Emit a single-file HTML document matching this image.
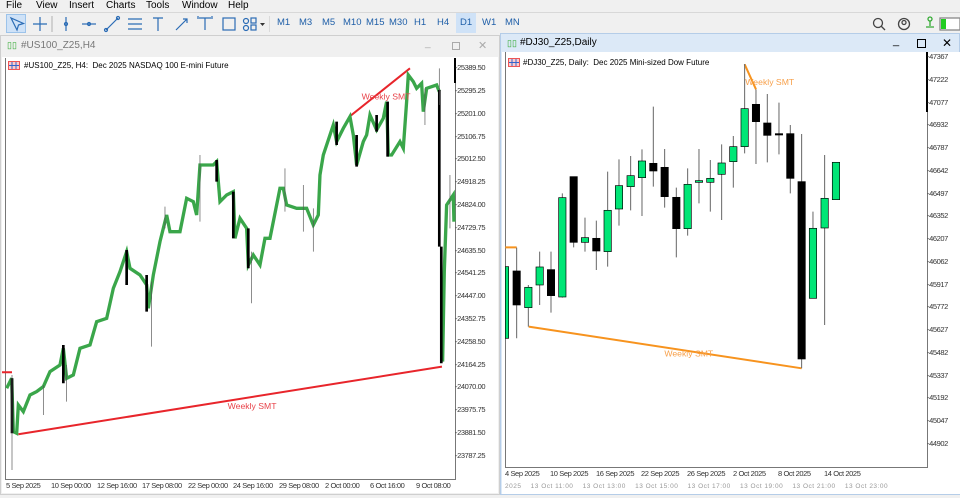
<!DOCTYPE html>
<html><head><meta charset="utf-8"><style>
*{margin:0;padding:0;box-sizing:border-box}
body{width:960px;height:498px;overflow:hidden;background:#f0f0f0;font-family:"Liberation Sans",sans-serif;position:relative}
.a{position:absolute}
.menu span{position:absolute;top:0;font-size:10px;color:#000}
.tf{position:absolute;top:17px;font-size:9.5px;color:#1f5fa8}
.ax{position:absolute;font-size:7.5px;color:#333;white-space:nowrap;letter-spacing:-0.4px}
</style></head><body>
<div class="menu">
<span style="left:6px">File</span><span style="left:36px">View</span><span style="left:69px">Insert</span><span style="left:106px">Charts</span><span style="left:146px">Tools</span><span style="left:182px">Window</span><span style="left:228px">Help</span>
</div>
<div class="a" style="left:0;top:12px;width:960px;height:1px;background:#d8d8d8"></div>
<div class="a" style="left:6px;top:14px;width:20px;height:19px;background:#cfe2f7;border:1px solid #9cc3ea"></div>
<svg class="a" style="left:0;top:12px" width="270" height="24" viewBox="0 0 270 24" fill="none" stroke="#2b6cb5" stroke-width="1.2">
<path d="M11 6 l6 12 1.5-5 5-1.5z"/>
<path d="M40 5v14M33 12h14"/>
<line x1="52" y1="4" x2="52" y2="20" stroke="#bbb"/>
<path d="M66 5v14"/><circle cx="66" cy="12" r="1.5"/>
<path d="M82 12h14"/><circle cx="89" cy="12" r="1.5"/>
<path d="M106 18l12-12"/><circle cx="106" cy="18" r="1.5"/><circle cx="118" cy="6" r="1.5"/>
<path d="M128 7h14M128 12h14M128 17h14"/>
<path d="M153 6h10M158 6v13"/>
<path d="M176 18l11-11M183 7h4v4"/>
<path d="M199 6h12M205 6v12M198 4v3M212 4v3"/>
<rect x="223" y="6" width="12" height="12"/>
<circle cx="246" cy="9" r="2.5"/><rect x="251" y="6" width="5" height="5"/><circle cx="246" cy="16" r="2.5"/><rect x="251" y="13" width="5" height="5"/>
<path d="M260 11h5l-2.5 3z" fill="#333" stroke="none"/>
<line x1="270" y1="4" x2="270" y2="20" stroke="#ccc"/>
</svg>
<span class="tf" style="left:277px">M1</span><span class="tf" style="left:299px">M3</span><span class="tf" style="left:322px">M5</span><span class="tf" style="left:343px">M10</span><span class="tf" style="left:366px">M15</span><span class="tf" style="left:389px">M30</span><span class="tf" style="left:414px">H1</span><span class="tf" style="left:437px">H4</span>
<div class="a" style="left:456px;top:13px;width:20px;height:20px;background:#cfe2f7"></div>
<span class="tf" style="left:460px">D1</span><span class="tf" style="left:482px">W1</span><span class="tf" style="left:505px">MN</span>
<svg class="a" style="left:868px;top:14px" width="92" height="20" fill="none" stroke="#444" stroke-width="1.3">
<circle cx="10" cy="9" r="4.5"/><path d="M13 12l4 4"/>
<circle cx="36" cy="10" r="5.5"/><circle cx="36" cy="8.5" r="2"/>
<circle cx="62" cy="5" r="2" stroke="#3a3"/><path d="M62 7v5M58 13h8" stroke="#3a3"/>
<rect x="72" y="4" width="20" height="12" fill="#fff" stroke="#888"/><rect x="73" y="5" width="5" height="10" fill="#2c2" stroke="none"/>
</svg>

<!-- left window -->
<div class="a" style="left:0;top:35px;width:500px;height:460px;background:#f0f0f0;border:1px solid #cfcfcf"></div>
<span class="a" style="left:7px;top:40px;font-size:9px;color:#3a3">&#9647;&#9647;</span>
<span class="a" style="left:21px;top:40px;font-size:10px;color:#777">#US100_Z25,H4</span>
<span class="a" style="left:425px;top:38px;font-size:10px;color:#aaa">_</span>
<div class="a" style="left:452px;top:42px;width:8px;height:8px;border:1px solid #aaa"></div>
<span class="a" style="left:478px;top:39px;font-size:11px;color:#aaa">✕</span>
<div class="a" style="left:2px;top:57px;width:496px;height:436px;background:#fff"></div>
<div class="a" style="left:5px;top:58px;width:451px;height:422px;border:1px solid #777;border-top:none;border-bottom:1px solid #777"></div>
<div class="a" style="left:454px;top:58px;width:2px;height:25px;background:#000"></div>
<svg class="a" style="left:8px;top:61px" width="12" height="9"><rect x="0.5" y="0.5" width="11" height="8" fill="#fcc" stroke="#e55"/><path d="M4 1v7M8 1v7M1 4.5h10" stroke="#36c" stroke-width="1"/></svg>
<span class="a" style="left:24px;top:61px;font-size:8px;color:#000">#US100_Z25, H4:&nbsp; Dec 2025 NASDAQ 100 E-mini Future</span>

<svg class="a" style="left:0;top:55px" width="500" height="443">
<g transform="scale(0.3333)">
<path d="M6 952h30 M55 1138 L1326 935 M1052 182 L1230 40" stroke="#e8252b" stroke-width="6" fill="none"/>
<polyline fill="none" stroke="#3aa64a" stroke-width="10" points="20,1000 35,970 40,1130 50,1135 55,1050 70,1070 90,1020 110,1010 130,995 150,950 180,930 190,880 200,970 220,960 240,880 270,870 290,800 320,790 340,700 360,650 380,590 390,640 420,660 440,690 445,760 460,660 480,560 500,480 510,530 540,530 560,430 580,440 590,480 600,330 640,330 650,320 660,440 680,420 700,410 705,550 720,490 740,520 745,630 760,600 780,630 795,550 810,550 840,400 850,400 860,450 890,460 920,460 940,510 955,480 960,360 970,300 1000,210 1010,260 1030,220 1050,185 1060,240 1070,330 1090,260 1100,240 1110,180 1130,225 1150,190 1160,140 1165,300 1175,300 1200,260 1210,280 1220,140 1225,60 1240,80 1250,100 1265,85 1270,170 1280,100 1310,90 1318,110"/>
<polyline fill="none" stroke="#3aa64a" stroke-width="10" points="1328,920 1333,650 1340,450 1360,420 1362,500"/>
<g stroke="#000" stroke-width="8" fill="none">
<path d="M36 970V1135 M440 660V770 M700 410V550 M745 520V640 M1163 140V305 M1318 105V575 M1324 575V925 M650 315V380 M380 585V690 M190 870V985 M1010 200V270 M1070 240V335 M1130 180V230"/>
</g>
<g stroke="#555" stroke-width="2" fill="none">
<path d="M36 960V1245 M455 680V875 M755 590V745 M940 460V590 M1318 40V150 M1275 100V210 M855 340V470 M495 455V520 M130 990V1080 M200 930V1040 M600 300V500 M910 390V530 M1350 360V520"/>
</g>
<text x="1085" y="133" fill="#e8434a" font-size="26" font-family="Liberation Sans">Weekly SMT</text>
<text x="683" y="1062" fill="#e8434a" font-size="26" font-family="Liberation Sans">Weekly SMT</text>
</g>
</svg>
<div class="ax" style="left:455px;top:63px">-25389.50</div>
<div class="ax" style="left:455px;top:86px">-25295.25</div>
<div class="ax" style="left:455px;top:109px">-25201.00</div>
<div class="ax" style="left:455px;top:132px">-25106.75</div>
<div class="ax" style="left:455px;top:154px">-25012.50</div>
<div class="ax" style="left:455px;top:177px">-24918.25</div>
<div class="ax" style="left:455px;top:200px">-24824.00</div>
<div class="ax" style="left:455px;top:223px">-24729.75</div>
<div class="ax" style="left:455px;top:246px">-24635.50</div>
<div class="ax" style="left:455px;top:268px">-24541.25</div>
<div class="ax" style="left:455px;top:291px">-24447.00</div>
<div class="ax" style="left:455px;top:314px">-24352.75</div>
<div class="ax" style="left:455px;top:337px">-24258.50</div>
<div class="ax" style="left:455px;top:360px">-24164.25</div>
<div class="ax" style="left:455px;top:382px">-24070.00</div>
<div class="ax" style="left:455px;top:405px">-23975.75</div>
<div class="ax" style="left:455px;top:428px">-23881.50</div>
<div class="ax" style="left:455px;top:451px">-23787.25</div>
<div class="ax" style="left:6px;top:481px">5 Sep 2025</div>
<div class="ax" style="left:51px;top:481px">10 Sep 00:00</div>
<div class="ax" style="left:97px;top:481px">12 Sep 16:00</div>
<div class="ax" style="left:142px;top:481px">17 Sep 08:00</div>
<div class="ax" style="left:188px;top:481px">22 Sep 00:00</div>
<div class="ax" style="left:233px;top:481px">24 Sep 16:00</div>
<div class="ax" style="left:279px;top:481px">29 Sep 08:00</div>
<div class="ax" style="left:325px;top:481px">2 Oct 00:00</div>
<div class="ax" style="left:370px;top:481px">6 Oct 16:00</div>
<div class="ax" style="left:416px;top:481px">9 Oct 08:00</div>

<!-- right window -->
<div class="a" style="left:500px;top:33px;width:460px;height:462px;background:#dce9f7;border:1px solid #b5cde8"></div>
<span class="a" style="left:507px;top:38px;font-size:9px;color:#3a3">&#9647;&#9647;</span>
<span class="a" style="left:520px;top:37px;font-size:10px;color:#000">#DJ30_Z25,Daily</span>
<span class="a" style="left:893px;top:35px;font-size:11px;color:#000">_</span>
<div class="a" style="left:917px;top:39px;width:9px;height:9px;border:1px solid #000"></div>
<span class="a" style="left:942px;top:36px;font-size:12px;color:#000">✕</span>
<div class="a" style="left:502px;top:52px;width:458px;height:428px;background:#fff"></div>
<div class="a" style="left:505px;top:52px;width:423px;height:416px;border:1px solid #777;border-top:none"></div>
<div class="a" style="left:926px;top:52px;width:2px;height:60px;background:#000"></div>
<svg class="a" style="left:508px;top:58px" width="12" height="9"><rect x="0.5" y="0.5" width="11" height="8" fill="#fcc" stroke="#e55"/><path d="M4 1v7M8 1v7M1 4.5h10" stroke="#36c" stroke-width="1"/></svg>
<span class="a" style="left:523px;top:58px;font-size:8px;color:#000">#DJ30_Z25, Daily:&nbsp; Dec 2025 Mini-sized Dow Future</span>

<svg class="a" style="left:500px;top:55px" width="460" height="443">
<g transform="scale(0.3333)">
<g fill="none" stroke="#f7931e" stroke-width="6">
<path d="M16 577H50 M86 815 L905 940 M734 28 L768 103"/>
</g>
<g stroke="#666" stroke-width="3">
<path d="M50 578V850M85 690V815M119 590V750M153 590V773M187 415V728M221 365V577M255 488V590M289 497V645M323 350V635M357 313V512M392 303V466M426 283V483M460 155V395M494 282V458M529 398V607M563 340V542M597 282V445M631 315V470M665 268V495M700 243V398M734 27V295M768 103V327M802 117V322M837 143V298M871 210V415M905 237V940M939 470V730M974 300V810"/>
</g>
<g stroke="#000" stroke-width="2">
<rect x="16" y="635" width="10" height="215" fill="#00e676"/>
<rect x="39" y="648" width="22" height="102" fill="#000"/>
<rect x="74" y="697" width="22" height="61" fill="#00e676"/>
<rect x="108" y="636" width="22" height="54" fill="#00e676"/>
<rect x="142" y="644" width="22" height="78" fill="#000"/>
<rect x="176" y="428" width="22" height="298" fill="#00e676"/>
<rect x="210" y="365" width="22" height="197" fill="#000"/>
<rect x="244" y="548" width="22" height="14" fill="#00e676"/>
<rect x="278" y="550" width="22" height="38" fill="#000"/>
<rect x="312" y="466" width="22" height="124" fill="#00e676"/>
<rect x="346" y="392" width="22" height="70" fill="#00e676"/>
<rect x="381" y="362" width="22" height="33" fill="#00e676"/>
<rect x="415" y="318" width="22" height="50" fill="#00e676"/>
<rect x="449" y="325" width="22" height="23" fill="#000"/>
<rect x="483" y="337" width="22" height="88" fill="#000"/>
<rect x="518" y="427" width="22" height="94" fill="#000"/>
<rect x="552" y="388" width="22" height="133" fill="#00e676"/>
<rect x="586" y="377" width="22" height="5" fill="#00e676"/>
<rect x="620" y="370" width="22" height="12" fill="#00e676"/>
<rect x="654" y="324" width="22" height="34" fill="#00e676"/>
<rect x="689" y="275" width="22" height="45" fill="#00e676"/>
<rect x="723" y="161" width="22" height="114" fill="#00e676"/>
<rect x="757" y="148" width="22" height="52" fill="#000"/>
<rect x="791" y="204" width="22" height="37" fill="#000"/>
<rect x="826" y="236" width="22" height="4" fill="#000"/>
<rect x="860" y="236" width="22" height="134" fill="#000"/>
<rect x="894" y="380" width="22" height="532" fill="#000"/>
<rect x="928" y="520" width="22" height="210" fill="#00e676"/>
<rect x="963" y="430" width="22" height="89" fill="#00e676"/>
<rect x="997" y="322" width="22" height="112" fill="#00e676"/>
</g>
<text x="736" y="90" fill="#f7a04a" font-size="26" font-family="Liberation Sans">Weekly SMT</text>
<text x="493" y="904" fill="#f7a04a" font-size="26" font-family="Liberation Sans">Weekly SMT</text>
</g>
</svg>
<div class="ax" style="left:927px;top:52px">-47367</div>
<div class="ax" style="left:927px;top:75px">-47222</div>
<div class="ax" style="left:927px;top:98px">-47077</div>
<div class="ax" style="left:927px;top:120px">-46932</div>
<div class="ax" style="left:927px;top:143px">-46787</div>
<div class="ax" style="left:927px;top:166px">-46642</div>
<div class="ax" style="left:927px;top:189px">-46497</div>
<div class="ax" style="left:927px;top:211px">-46352</div>
<div class="ax" style="left:927px;top:234px">-46207</div>
<div class="ax" style="left:927px;top:257px">-46062</div>
<div class="ax" style="left:927px;top:280px">-45917</div>
<div class="ax" style="left:927px;top:302px">-45772</div>
<div class="ax" style="left:927px;top:325px">-45627</div>
<div class="ax" style="left:927px;top:348px">-45482</div>
<div class="ax" style="left:927px;top:371px">-45337</div>
<div class="ax" style="left:927px;top:393px">-45192</div>
<div class="ax" style="left:927px;top:416px">-45047</div>
<div class="ax" style="left:927px;top:439px">-44902</div>
<div class="ax" style="left:505px;top:469px">4 Sep 2025</div>
<div class="ax" style="left:550px;top:469px">10 Sep 2025</div>
<div class="ax" style="left:596px;top:469px">16 Sep 2025</div>
<div class="ax" style="left:641px;top:469px">22 Sep 2025</div>
<div class="ax" style="left:687px;top:469px">26 Sep 2025</div>
<div class="ax" style="left:733px;top:469px">2 Oct 2025</div>
<div class="ax" style="left:778px;top:469px">8 Oct 2025</div>
<div class="ax" style="left:824px;top:469px">14 Oct 2025</div>
<div class="a" style="left:502px;top:480px;width:458px;height:14px;background:#fff"></div>
<div class="ax" style="left:505px;top:483px;color:#999;font-size:6.5px;letter-spacing:0.5px">2025 &nbsp;&nbsp; 13 Oct 11:00 &nbsp;&nbsp; 13 Oct 13:00 &nbsp;&nbsp; 13 Oct 15:00 &nbsp;&nbsp; 13 Oct 17:00 &nbsp;&nbsp; 13 Oct 19:00 &nbsp;&nbsp; 13 Oct 21:00 &nbsp;&nbsp; 13 Oct 23:00</div>
</body></html>
